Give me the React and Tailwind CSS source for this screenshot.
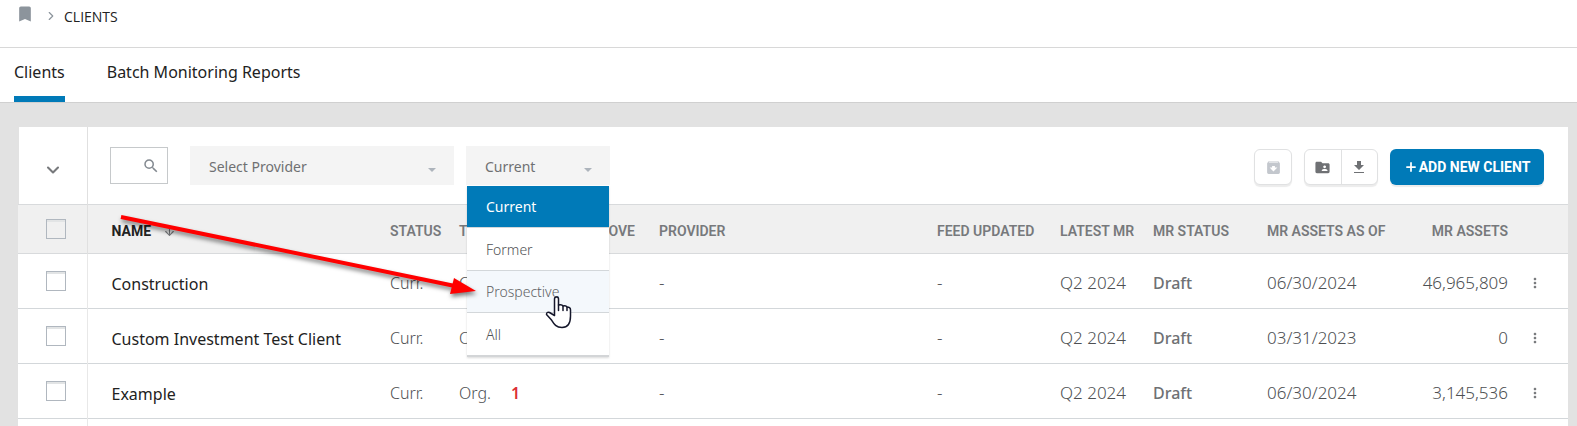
import { MdArchive, MdBookmark, MdFolderShared, MdMoreVert, MdSearch } from "react-icons/md";
import { ArrowDown, ChevronDown, ChevronRight, Plus } from "lucide-react";

const columns = [
  { label: "STATUS" },
  { label: "TYPE" },
  { label: "ABOVE", align: "right" },
  { label: "PROVIDER" },
  { label: "FEED UPDATED" },
  { label: "LATEST MR" },
  { label: "MR STATUS" },
  { label: "MR ASSETS AS OF" },
  { label: "MR ASSETS", align: "right" },
];

const clients = [
  { name: "Construction", above: "", asOf: "06/30/2024", assets: "46,965,809" },
  { name: "Custom Investment Test Client", above: "", asOf: "03/31/2023", assets: "0" },
  { name: "Example", above: "1", asOf: "06/30/2024", assets: "3,145,536" },
];

const statusOptions = ["Current", "Former", "Prospective", "All"];

function Tab({ children, active }) {
  return (
    <a
      href="#"
      aria-current={active ? "page" : undefined}
      className={`flex h-full items-center border-b-6 text-base text-[#222] ${
        active ? "border-[#007ab8]" : "border-transparent"
      }`}
    >
      {children}
    </a>
  );
}

function Checkbox({ label }) {
  return (
    <input
      type="checkbox"
      aria-label={label}
      className="block size-5 appearance-none border border-[#b0b7bf] bg-transparent shadow-[inset_0_2px_0_#e2e4e5]"
    />
  );
}

function FilterSelect({ label, value, options, className }) {
  return (
    <div className={`relative ${className}`}>
      <select
        aria-label={label}
        defaultValue={value}
        className="block h-[39px] w-full appearance-none bg-[#f4f4f4] px-[19px] pt-0.5 text-sm text-[#6f7072]"
      >
        {options.map((option) => (
          <option key={option}>{option}</option>
        ))}
      </select>
      <svg className="pointer-events-none absolute top-[22px] right-[18px]" width="8" height="4" viewBox="0 0 8 4">
        <path d="M0 0h8L4 4z" fill="#adb4bc" />
      </svg>
    </div>
  );
}

function StatusMenu() {
  return (
    <ul className="absolute top-10 right-px left-px z-10 border-b-2 border-[#d3d5d7] bg-white shadow-[0_1px_2px_rgba(0,0,0,0.15)]">
      {statusOptions.map((option) => (
        <li key={option} className="border-b border-[#d3d7da] last:border-b-0">
          <button
            type="button"
            className={`block w-full px-[19px] text-left text-sm ${
              option === "Current"
                ? "h-[41px] bg-[#007ab8] text-white"
                : option === "Prospective"
                  ? "h-[41px] bg-[#f4f8fc] font-light text-[#5f6164]"
                  : "h-[42px] bg-white pt-0.5 font-light text-[#4f5154]"
            }`}
          >
            {option}
          </button>
        </li>
      ))}
    </ul>
  );
}

function DownloadIcon() {
  return (
    <svg width="12" height="14" viewBox="0 0 12 14" fill="#6f7174">
      <path d="M4 1h4v4h3L6 10 1 5h3zM1 12h10v1H1z" />
    </svg>
  );
}

function Toolbar() {
  return (
    <div className="ml-px flex h-[77px] bg-white">
      <div className="flex w-[69px] shrink-0 items-center border-r border-[#e0e0e0] pt-2 pl-6">
        <button type="button" aria-label="Expand filters" className="text-[#77797c]">
          <ChevronDown size={20} strokeWidth={2.5} />
        </button>
      </div>
      <div className="flex flex-1 items-center pr-6 pl-[22px]">
        <div className="relative w-[58px]">
          <input
            type="text"
            aria-label="Search clients"
            className="block h-[37px] w-full border border-[#c6c9cb] bg-white pr-6 pl-2 text-sm"
          />
          <MdSearch className="pointer-events-none absolute top-[10px] right-2 text-[18px] text-[#838990]" />
        </div>
        <FilterSelect
          label="Provider"
          value="Select Provider"
          options={["Select Provider"]}
          className="ml-[22px] w-[264px]"
        />
        <div className="relative ml-3 w-36">
          <FilterSelect label="Client status" value="Current" options={statusOptions} className="w-full" />
          <StatusMenu />
        </div>
        <div className="ml-auto flex items-center gap-3 pt-[3px]">
          <button
            type="button"
            disabled
            aria-label="Archive"
            className="flex h-9 w-[38px] items-center justify-center rounded-md border border-[#e0e1e2] bg-white text-[17px] text-[#c3c7cd] shadow-[0_2px_1px_#ececec]"
          >
            <MdArchive />
          </button>
          <div className="flex h-9 w-[74px] divide-x divide-[#e0e1e2] rounded-md border border-[#e0e1e2] bg-white shadow-[0_2px_1px_#ececec]">
            <button type="button" aria-label="Shared folder" className="flex flex-1 items-center justify-center text-[17px] text-[#6f7174]">
              <MdFolderShared />
            </button>
            <button type="button" aria-label="Download" className="flex flex-1 items-center justify-center">
              <DownloadIcon />
            </button>
          </div>
          <button
            type="button"
            className="flex h-9 w-[154px] items-center justify-center gap-px rounded-md bg-[#007ab8] font-['Roboto','Noto_Sans',sans-serif] text-sm font-bold whitespace-nowrap text-white shadow-[0_2px_1px_#ececec]"
          >
            <Plus size={14} strokeWidth={3} />
            ADD NEW CLIENT
          </button>
        </div>
      </div>
    </div>
  );
}

function ClientsTable() {
  return (
    <table className="w-full table-fixed border-collapse bg-white text-left">
      <colgroup>
        <col className="w-[69px]" />
        <col className="w-[303px]" />
        <col className="w-[69px]" />
        <col className="w-[52px]" />
        <col className="w-[148px]" />
        <col />
        <col className="w-[123px]" />
        <col className="w-[93px]" />
        <col className="w-[114px]" />
        <col className="w-[130px]" />
        <col className="w-[111px]" />
        <col className="w-[60px]" />
      </colgroup>
      <thead className="bg-[#f0f0f0] font-['Roboto','Noto_Sans',sans-serif] text-sm text-[#77797c]">
        <tr className="h-[49px] border-y border-[#d8dadc]">
          <th className="border-r border-[#e0e0e0] pl-7">
            <Checkbox label="Select all clients" />
          </th>
          <th className="pt-1 pl-6 font-bold text-[#222]">
            <button type="button" className="flex items-center gap-3">
              NAME
              <ArrowDown size={13} className="text-[#77797c]" />
            </button>
          </th>
          {columns.map((column) => (
            <th
              key={column.label}
              className={`pt-1 font-semibold whitespace-nowrap ${
                column.label === "ABOVE" ? "pr-6 text-right" : column.align === "right" ? "text-right" : ""
              }`}
            >
              {column.label}
            </th>
          ))}
          <th aria-label="Actions" />
        </tr>
      </thead>
      <tbody className="text-[17px] font-light text-[#4d4f52]">
        {clients.map((client) => (
          <tr key={client.name} className="h-[55px] border-b border-[#d3d7da]">
            <td className="border-r border-[#e8e8e8] pl-7">
              <Checkbox label={`Select ${client.name}`} />
            </td>
            <td className="pt-1.5 pl-6 text-base font-normal text-[#222]">{client.name}</td>
            <td className="pt-1 text-base">Curr.</td>
            <td className="pt-1 text-base">Org.</td>
            <td className="pt-1 text-base font-semibold text-[#dc2f34]">{client.above}</td>
            <td className="pt-1">-</td>
            <td className="pt-1">-</td>
            <td className="pt-1">Q2 2024</td>
            <td className="pt-1 text-base font-medium text-[#6f7174]">Draft</td>
            <td className="pt-1">{client.asOf}</td>
            <td className="pt-1 text-right">{client.assets}</td>
            <td className="pt-1 pl-[19px]">
              <button type="button" aria-label={`Actions for ${client.name}`} className="block text-base text-[#77797c]">
                <MdMoreVert />
              </button>
            </td>
          </tr>
        ))}
        <tr className="h-2">
          <td className="border-r border-[#e8e8e8]" />
          <td colSpan={11} />
        </tr>
      </tbody>
    </table>
  );
}

function PointerArrow() {
  return (
    <svg
      className="pointer-events-none absolute top-[210px] left-[115px] z-20 drop-shadow-[1px_3px_2px_rgba(0,0,0,0.5)]"
      width="370"
      height="95"
      viewBox="0 0 370 95"
    >
      <path d="M6 7L340 76" stroke="#f00" strokeWidth="4" />
      <path d="M339 68L361 81 335 84z" fill="#f00" />
    </svg>
  );
}

function HandCursor() {
  return (
    <svg
      className="pointer-events-none absolute top-[296px] left-[545px] z-20"
      width="28"
      height="34"
      viewBox="0 0 28 34"
      fill="#fff"
      stroke="#15172b"
      strokeWidth="1.5"
      strokeLinejoin="round"
      strokeLinecap="round"
    >
      <path d="M9.5 19.5V3Q9.5 1 11.5 1T13.5 3V9Q17 8 18 10Q21 9 22 11Q25.5 11 25.5 14V20C25.5 27 22.5 31.5 17 31.5C11 31.5 9 28 6.5 24L1.5 18.5Q1.5 15.5 4.5 16.5Z" />
      <path d="M13.5 9V14.5M18 10V14.5M22 11V14.5" />
    </svg>
  );
}

export default function App() {
  return (
    <div className="relative flex min-h-screen flex-col bg-white font-['Noto_Sans',sans-serif] text-[#222]">
      <nav aria-label="Breadcrumb" className="flex h-12 items-start border-b border-[#d8d8d8] pt-1 pl-[15px]">
        <a href="#" aria-label="Bookmarks" className="text-[20px] text-[#8c949c]">
          <MdBookmark />
        </a>
        <ChevronRight size={14} className="mt-[5px] ml-[9px] text-[#8c949c]" />
        <a href="#" className="ml-1.5 pt-px font-['Open_Sans','Noto_Sans',sans-serif] text-sm leading-6">
          CLIENTS
        </a>
      </nav>
      <nav aria-label="Sections" className="flex h-[55px] gap-[42px] border-b border-[#d0d0d0] pl-3.5">
        <Tab active>Clients</Tab>
        <Tab>Batch Monitoring Reports</Tab>
      </nav>
      <main className="flex-1 bg-[#e2e2e2] pt-6 pr-[9px] pl-[18px]">
        <Toolbar />
        <ClientsTable />
      </main>
      <PointerArrow />
      <HandCursor />
    </div>
  );
}
